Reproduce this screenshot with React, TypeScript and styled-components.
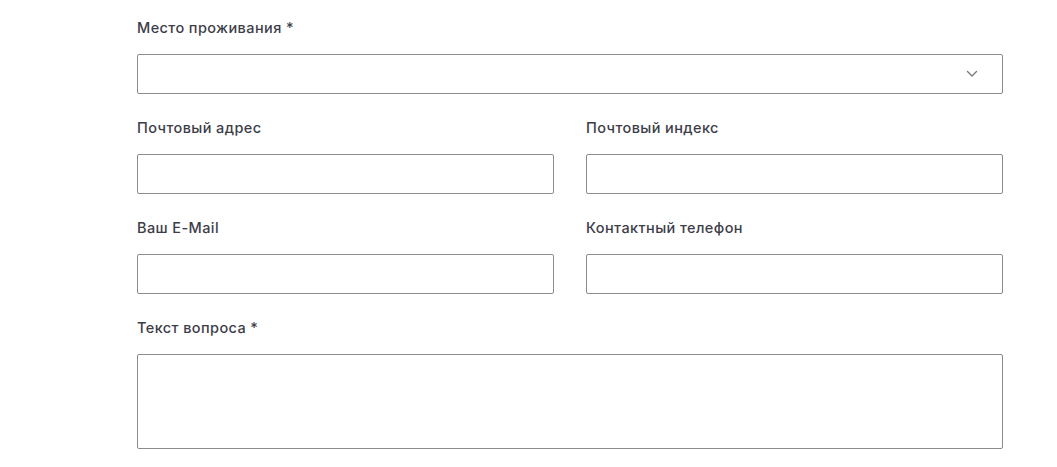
import React from "react";
import styled, { createGlobalStyle } from "styled-components";

const Global = createGlobalStyle`
  html, body { margin: 0; padding: 0; background: #fff; }
  body { font-family: Inter, "Noto Sans", sans-serif; }
  * { box-sizing: border-box; }
`;

const Form = styled.form`
  width: 866px;
  margin-left: 137px;
  padding-top: 18px;
  display: flex;
  flex-direction: column;
  gap: 24px;
`;

const Row = styled.div`
  display: grid;
  grid-template-columns: 1fr 1fr;
  column-gap: 32px;
`;

const Field = styled.label`
  display: flex;
  flex-direction: column;
  gap: 16px;
`;

const Label = styled.span`
  font-size: 14.5px;
  line-height: 20px;
  font-weight: 500;
  color: #3d3d49;
  letter-spacing: 0.4px;
`;

const boxCss = `
  width: 100%;
  border: 1px solid #8c8c8c;
  border-radius: 2px;
  background: #fff;
  font-family: inherit;
  font-size: 15px;
  outline: none;
`;

const Input = styled.input`
  ${boxCss}
  height: 40px;
  padding: 0 12px;
`;

const SelectBox = styled.div`
  ${boxCss}
  height: 40px;
  display: flex;
  align-items: center;
  justify-content: flex-end;
  padding-right: 24px;
`;

const TextArea = styled.textarea`
  ${boxCss}
  height: 95px;
  resize: none;
  padding: 10px 12px;
  display: block;
`;

const Chevron = () => (
  <svg width="12" height="8" viewBox="0 0 12 8" fill="none">
    <path d="M1.5 1.5 L6 6 L10.5 1.5" stroke="#7a7a7a" strokeWidth="1.4" strokeLinecap="round" strokeLinejoin="round" />
  </svg>
);

export default function App() {
  return (
    <>
      <Global />
      <Form>
        <Field as="div">
          <Label>Место проживания *</Label>
          <SelectBox>
            <Chevron />
          </SelectBox>
        </Field>
        <Row>
          <Field>
            <Label>Почтовый адрес</Label>
            <Input />
          </Field>
          <Field>
            <Label>Почтовый индекс</Label>
            <Input />
          </Field>
        </Row>
        <Row>
          <Field>
            <Label>Ваш E-Mail</Label>
            <Input />
          </Field>
          <Field>
            <Label>Контактный телефон</Label>
            <Input />
          </Field>
        </Row>
        <Field>
          <Label>Текст вопроса *</Label>
          <TextArea />
        </Field>
      </Form>
    </>
  );
}
